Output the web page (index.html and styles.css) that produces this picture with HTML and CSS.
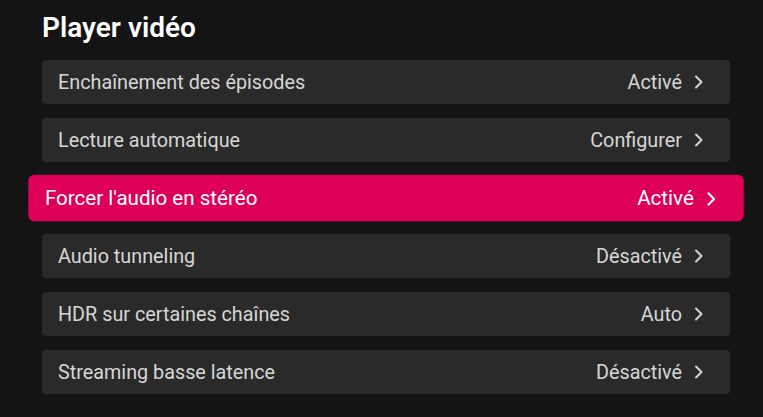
FILE: index.html
```html
<!DOCTYPE html>
<html lang="fr">
<head>
<meta charset="utf-8">
<link rel="stylesheet" href="styles.css">
</head>
<body>
<main class="page">
  <h1 class="title">Player vidéo</h1>
  <ul class="list">
    <li class="row"><span class="label">Enchaînement des épisodes</span><span class="value">Activé<svg class="chev" viewBox="0 0 10 14"><path d="M2 1.5l5.5 5.5-5.5 5.5"/></svg></span></li>
    <li class="row"><span class="label">Lecture automatique</span><span class="value">Configurer<svg class="chev" viewBox="0 0 10 14"><path d="M2 1.5l5.5 5.5-5.5 5.5"/></svg></span></li>
    <li class="row focused"><span class="label">Forcer l'audio en stéréo</span><span class="value">Activé<svg class="chev" viewBox="0 0 10 14"><path d="M2 1.5l5.5 5.5-5.5 5.5"/></svg></span></li>
    <li class="row"><span class="label">Audio tunneling</span><span class="value">Désactivé<svg class="chev" viewBox="0 0 10 14"><path d="M2 1.5l5.5 5.5-5.5 5.5"/></svg></span></li>
    <li class="row"><span class="label">HDR sur certaines chaînes</span><span class="value">Auto<svg class="chev" viewBox="0 0 10 14"><path d="M2 1.5l5.5 5.5-5.5 5.5"/></svg></span></li>
    <li class="row"><span class="label">Streaming basse latence</span><span class="value">Désactivé<svg class="chev" viewBox="0 0 10 14"><path d="M2 1.5l5.5 5.5-5.5 5.5"/></svg></span></li>
  </ul>
</main>
</body>
</html>
```
FILE: styles.css
```css
html, body {
  margin: 0;
  padding: 0;
  background: #141414;
  height: 100%;
  overflow: hidden;
}
body {
  font-family: Roboto, "Noto Sans", sans-serif;
  color: #d9d9d9;
}
.page {
  padding: 11px 0 0 42px;
  width: 688px;
}
.title {
  margin: 0 0 16px 0;
  font-size: 28px;
  line-height: 33px;
  font-weight: 600;
  color: #ffffff;
}
.list {
  list-style: none;
  margin: 0;
  padding: 0;
  display: flex;
  flex-direction: column;
  gap: 14px;
}
.row {
  height: 44px;
  box-sizing: border-box;
  display: flex;
  align-items: center;
  justify-content: space-between;
  padding: 0 26px 0 16px;
  background: #2a2a2a;
  border-radius: 4px;
  font-size: 19.8px;
  color: #d6d6d6;
}
.value {
  display: flex;
  align-items: center;
  gap: 12px;
}
.chev {
  width: 10px;
  height: 14px;
  fill: none;
  stroke: currentColor;
  stroke-width: 2;
  stroke-linecap: round;
  stroke-linejoin: round;
}
.focused {
  background: #de0058;
  color: #ffffff;
  transform: scale(1.04, 1.06);
  border-radius: 6px;
}
.focused .label, .focused .value {
  transform: scaleY(0.981);
}
```
